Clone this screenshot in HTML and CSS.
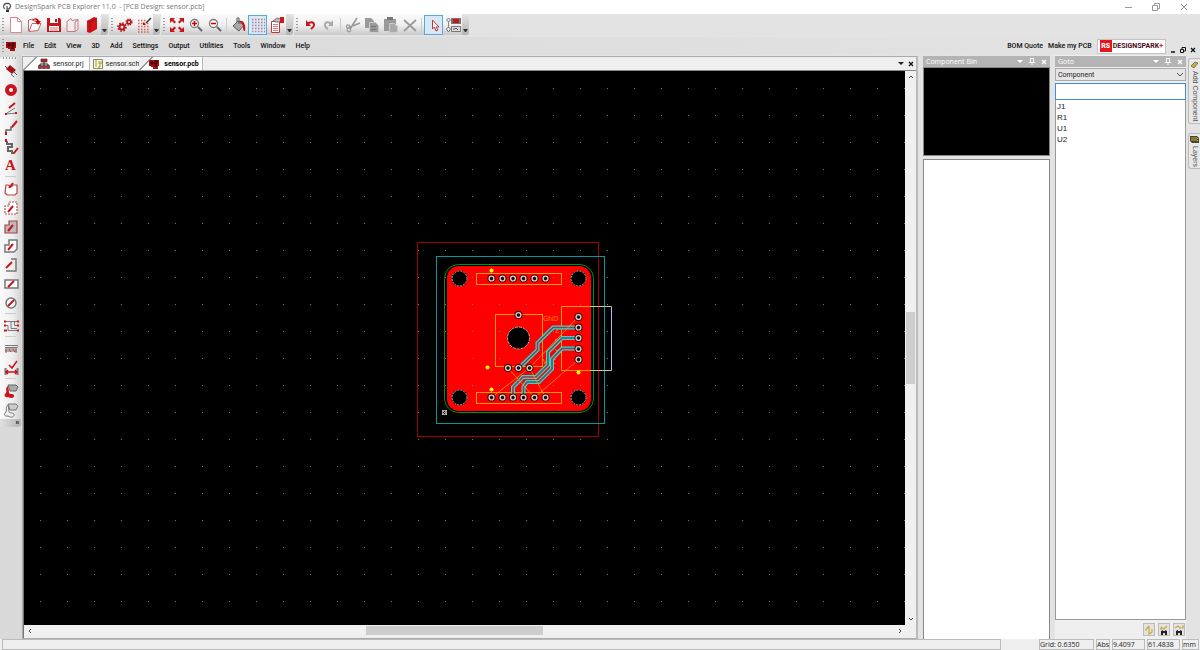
FILE: index.html
```html
<!DOCTYPE html>
<html lang="en">
<head>
    <meta charset="UTF-8">
    <meta name="viewport" content="width=device-width, initial-scale=1.0">
    <title>DesignSpark PCB Explorer 11.0 - [PCB Design: sensor.pcb]</title>
    <link rel="stylesheet" href="styles.css">
</head>
<body>
    <div class="title-bar">
        <svg class="app-icon" width="10" height="11" viewBox="0 0 10 11"><path d="M3 7C1 6 1 2 4 1.500h3c2 1 2 4 0 5.500H5V4" fill="none" stroke="#555" stroke-width="1.300"/><path d="M4 8h3v2H4z" fill="#333"/></svg>
        <span class="title">DesignSpark PCB Explorer 11.0 &nbsp;- [PCB Design: sensor.pcb]</span>
        <div class="window-buttons">
            <button aria-label="Minimize"><svg width="8" height="8"><path d="M1 4.500h7" stroke="#999"/></svg></button>
            <button aria-label="Restore"><svg width="8" height="8"><path d="M.5 2.500h5v5h-5zM2.500 2V.5h5v5H6" fill="none" stroke="#999"/></svg></button>
            <button aria-label="Close"><svg width="8" height="8"><path d="M1 1l6 6M7 1L1 7" stroke="#999"/></svg></button>
        </div>
    </div>

    <div class="toolbar">
        <div class="tool-group">
            <i class="grip"></i>
            <button aria-label="New"><svg width="16" height="18"><path d="M2.500 1.500h7l4 4v11h-11z" fill="#fff" stroke="#d98a8a"/><path d="M9.500 1.500v4h4" fill="none" stroke="#d98a8a"/></svg></button>
            <button aria-label="Open"><svg width="16" height="18"><path d="M1.500 15V4l4-1 1 2h4M2 15.500l3-8h9l-3 7z" fill="#fff" stroke="#b66"/><path d="M5 5c2-4 6-3 7 0h2l-3 4-3-4h2C9 3 7 3 5 5" fill="#c00"/></svg></button>
            <button aria-label="Save"><svg width="16" height="18"><path d="M1 2h13l1 2v12H1z" fill="#c9141c"/><path d="M4 2h8v5H4zM3 10h10v5H3z" fill="#fff"/><path d="M9 3h2v3H9z" fill="#c9141c"/><path d="M4 12h8M4 14h8" stroke="#c77"/></svg></button>
            <button aria-label="Close folder"><svg width="16" height="18"><path d="M2 5.500l4-3 1 2 6-1v10l-3 2H2z" fill="#eee" stroke="#c77"/><path d="M10 15V6l3-2" fill="none" stroke="#c77"/></svg></button>
            <button aria-label="Library"><svg width="16" height="18"><path d="M3 5l7-4 3 1v11l-7 4-3-1z" fill="#d2141b"/><path d="M3 5l3 1 7-4M6 6v10" fill="none" stroke="#8b0a10" stroke-width=".7"/></svg></button>
            <i class="more"></i>
        </div>
        <div class="tool-group">
            <i class="grip"></i>
            <button aria-label="Options"><svg width="16" height="18"><circle cx="5" cy="11" r="2.500" fill="none" stroke="#b9151b" stroke-width="2"/><circle cx="5" cy="11" r="4" fill="none" stroke="#b9151b" stroke-width="1.600" stroke-dasharray="1.600 1.500"/><circle cx="12" cy="6" r="1.800" fill="none" stroke="#b9151b" stroke-width="1.600"/><circle cx="12" cy="6" r="3" fill="none" stroke="#b9151b" stroke-width="1.300" stroke-dasharray="1.400 1"/></svg></button>
            <button aria-label="Grid setup"><svg width="16" height="18"><path d="M2 4.500h9M2 7.500h12M2 10.500h12M2 13.500h12M2 16h12" stroke="#d66" stroke-width="1.400" stroke-dasharray="1.500 1.500"/><path d="M15 2l-5 5" stroke="#333" stroke-width="1.500"/><path d="M7 6l3 3H7z" fill="#c00"/></svg></button>
            <i class="more"></i>
        </div>
        <div class="tool-group">
            <i class="grip"></i>
            <button aria-label="View all"><svg width="16" height="18"><path d="M1 2h5L4.500 3.500 7 6 5.500 7.500 3 5 1 7zM15 2h-5l1.500 1.500L9 6l1.500 1.500L13 5l2 2zM1 16h5l-1.500-1.500L7 12l-1.500-1.500L3 13l-2-2zM15 16h-5l1.500-1.500L9 12l1.500-1.500L13 13l2-2z" fill="#c9141c"/></svg></button>
            <button aria-label="Zoom in"><svg width="16" height="18"><circle cx="6.500" cy="7.500" r="4" fill="#fff" stroke="#777" stroke-width="1.300"/><path d="M10 11l4 4" stroke="#666" stroke-width="2"/><path d="M4 7.500h5M6.500 5v5" stroke="#c00" stroke-width="1.600"/></svg></button>
            <button aria-label="Zoom out"><svg width="16" height="18"><circle cx="6.500" cy="7.500" r="4" fill="#fff" stroke="#777" stroke-width="1.300"/><path d="M10 11l4 4" stroke="#666" stroke-width="2"/><path d="M4 7.500h5" stroke="#c00" stroke-width="1.600"/></svg></button>
            <i class="line"></i>
            <button aria-label="Colours"><svg width="16" height="18"><path d="M2 10l5-5 6 4-5 6z" fill="#aaa" stroke="#555"/><path d="M6 6V2h2v6" fill="none" stroke="#555"/><path d="M8 5c5-1 7 4 6 10-2 0-2-2-2-6z" fill="#c9141c"/></svg></button>
            <button class="active" aria-label="Grid"><svg width="16" height="18"><path d="M2 3.500h13M2 6.500h13M2 9.500h13M2 12.500h13M2 15.500h13" stroke="#c07a88" stroke-width="1.300" stroke-dasharray="1.500 1.500"/></svg></button>
            <button aria-label="Properties"><svg width="16" height="18"><path d="M2.500 5.500h8v11h-8z" fill="#fff" stroke="#c33"/><path d="M4 8.500h5M4 10.500h5M4 12.500h5M4 14.500h5" stroke="#d77"/><path d="M4 5l4-3 4 1v3H7z" fill="#bbb" stroke="#555" stroke-width=".7"/><path d="M11 1h4v6h-4z" fill="#d2141b"/></svg></button>
            <i class="more"></i>
        </div>
        <div class="tool-group">
            <i class="grip"></i>
            <button aria-label="Undo"><svg width="16" height="18"><path d="M5 8c4-3 7-2 7 1 0 2-2 3-3 4" fill="none" stroke="#c9141c" stroke-width="2"/><path d="M4 4v6h5z" fill="#c9141c"/></svg></button>
            <button aria-label="Redo"><svg width="16" height="18"><path d="M11 8C7 5 4 6 4 9c0 2 1 3 3 4" fill="none" stroke="#aaa" stroke-width="2"/><path d="M12 4v6H7z" fill="#aaa"/></svg></button>
            <i class="line"></i>
            <button aria-label="Cut"><svg width="16" height="18"><path d="M12 2L5 13M15 7L5 11" stroke="#999" stroke-width="1.600"/><circle cx="4" cy="14" r="1.800" fill="none" stroke="#999" stroke-width="1.200"/><circle cx="3" cy="10.500" r="1.600" fill="none" stroke="#999" stroke-width="1.200"/></svg></button>
            <button aria-label="Copy"><svg width="16" height="18"><path d="M1 2h6l3 3v7H1z" fill="#999"/><path d="M5.500 6.500h6l3 3v7h-9z" fill="#999" stroke="#ccc"/><path d="M7 10.500h5M7 13.500h5" stroke="#777"/></svg></button>
            <button aria-label="Paste"><svg width="16" height="18"><path d="M1 3h12v12H1z" fill="#999"/><path d="M4 1h6v3H4z" fill="#777"/><path d="M6.500 7.500h5l3 3v6h-8z" fill="#aaa" stroke="#ccc"/></svg></button>
            <button aria-label="Delete"><svg width="16" height="18"><path d="M2 4l12 11M14 4L2 15" stroke="#999" stroke-width="1.700"/></svg></button>
            <i class="line"></i>
            <button class="active" aria-label="Select"><svg width="16" height="18"><path d="M6.500 4v9l2-2 1.500 4 2-1-2-3h3z" fill="#fff" stroke="#c33"/></svg></button>
            <button aria-label="Component bin"><svg width="16" height="18"><path d="M3.500 2v14" stroke="#888"/><path d="M3.500 2l2 2-2 2-2-2zM3.500 11l2 2-2 3-2-3z" fill="#eee" stroke="#777"/><path d="M6 2h10v6H6z" fill="#777"/><path d="M8 3h6v4H8z" fill="#c9141c"/><path d="M6.500 10.500h9v5h-9z" fill="#ddd" stroke="#777"/><path d="M8 13h2l1-1 2 2" fill="none" stroke="#555"/></svg></button>
            <i class="more"></i>
        </div>
    </div>

    <div class="menu-bar">
        <i class="grip"></i>
        <svg class="pcb-icon" width="10" height="10"><use href="#pcb"/></svg>
        <nav class="menu">
            <a href="#">File</a>
            <a href="#">Edit</a>
            <a href="#">View</a>
            <a href="#">3D</a>
            <a href="#">Add</a>
            <a href="#">Settings</a>
            <a href="#">Output</a>
            <a href="#">Utilities</a>
            <a href="#">Tools</a>
            <a href="#">Window</a>
            <a href="#">Help</a>
        </nav>
        <nav class="links">
            <a href="#">BOM Quote</a>
            <a href="#">Make my PCB</a>
            <a class="brand" href="#"><b>RS</b><span>DESIGNSPARK</span><em>+</em></a>
        </nav>
        <div class="mdi-buttons">
            <button aria-label="Minimize document"><svg width="6" height="6"><path d="M1 5h4" stroke="#111" stroke-width="1.500"/></svg></button>
            <button aria-label="Restore document"><svg width="6" height="6"><path d="M.5 2.500h3v3h-3zM2 2V.5h3.500V4H4" fill="none" stroke="#111"/></svg></button>
            <button aria-label="Close document"><svg width="6" height="6"><path d="M1 1l4 4M5 1L1 5" stroke="#111" stroke-width="1.300"/></svg></button>
        </div>
    </div>

    <div class="workspace">
        <div class="sidebar">
            <div class="side-tools">
                <i class="grip-h"></i>
                <button aria-label="Add component"><svg width="16" height="16"><path d="M3 6l4-4 6 5-4 4z" fill="#a5141a"/><path d="M8 11l3 3M11 9l3 3M4 5L2 3" stroke="#555"/></svg></button>
                <button aria-label="Add pad"><svg width="16" height="16"><circle cx="8" cy="8" r="4" fill="#fff" stroke="#c9141c" stroke-width="4"/></svg></button>
                <button aria-label="Add connection"><svg width="16" height="16"><path d="M4 12l8-5M3 13l11-1" stroke="#777"/><path d="M6 7l6-5" stroke="#c9141c" stroke-width="2"/><path d="M2 12h2v2H2zM12 11h2v2h-2z" fill="#c9141c"/></svg></button>
                <button aria-label="Add track"><svg width="16" height="16"><path d="M3 13v-3h5V7h2" fill="none" stroke="#666" stroke-width="1.500"/><path d="M9 7l5-6" stroke="#c9141c" stroke-width="2"/><path d="M2 12h2v3H2z" fill="#c9141c"/></svg></button>
                <button aria-label="Edit track"><svg width="16" height="16"><path d="M4 2v3h5v3H5v4h4v2h3" fill="none" stroke="#666" stroke-width="2"/><path d="M11 14l4-5" stroke="#c9141c" stroke-width="2"/><path d="M2 0h2v3H2z" fill="#c9141c"/></svg></button>
                <button class="letter" aria-label="Add text">A</button>
                <i class="line-h"></i>
                <button aria-label="Add board"><svg width="16" height="16"><path d="M3 4h2l3 2 2-2h4v8l-2 2H4l-2-2z" fill="#fff" stroke="#b44" stroke-width="1.200"/><path d="M6 7l4-5" stroke="#c9141c" stroke-width="2"/></svg></button>
                <button aria-label="Add area"><svg width="16" height="16"><path d="M6 2h8v12H2V6h4z" fill="#fff" stroke="#a55" stroke-width="1.200" stroke-dasharray="2 1"/><path d="M5 12l5-6" stroke="#c9141c" stroke-width="2"/></svg></button>
                <button aria-label="Add copper"><svg width="16" height="16"><path d="M6 2h8v12H2V6h4z" fill="#bbb" stroke="#a44" stroke-width="1.200"/><path d="M5 12l5-6" stroke="#c9141c" stroke-width="2"/></svg></button>
                <button aria-label="Add shape"><svg width="16" height="16"><path d="M6 2h8v9l-3 3H2V7h4z" fill="#fff" stroke="#777" stroke-width="1.500"/><path d="M5 12l5-6" stroke="#c9141c" stroke-width="2"/></svg></button>
                <button aria-label="Add open shape"><svg width="16" height="16"><path d="M8 2h5v12H3" fill="none" stroke="#777" stroke-width="1.500"/><path d="M3 11l6-6" stroke="#c9141c" stroke-width="2"/></svg></button>
                <button aria-label="Add rectangle"><svg width="16" height="16"><path d="M2 4h13v8H2z" fill="#fff" stroke="#777" stroke-width="1.500"/><path d="M5 11l6-6" stroke="#c9141c" stroke-width="2"/></svg></button>
                <button aria-label="Add circle"><svg width="16" height="16"><circle cx="8" cy="8" r="5" fill="#fff" stroke="#777" stroke-width="1.500"/><path d="M5 11l6-6" stroke="#c9141c" stroke-width="2"/></svg></button>
                <i class="line-h"></i>
                <button aria-label="Auto route"><svg width="16" height="16"><path d="M2 3.500h6v7h6M2 7.500h3v5h9M8 3.500h6M11.500 4v3.500h4" fill="none" stroke="#777"/><path d="M1 3.500h2M1 7.500h2M1 12.500h3M14 3.500h2M14 7.500h2M14 12.500h2" stroke="#c9141c" stroke-width="2"/></svg></button>
                <i class="line-h"></i>
                <button aria-label="Clearance"><svg width="16" height="16"><path d="M2 4.500h13M2 6.500h13" stroke="#777"/><path d="M2 9h12" stroke="#aaa" stroke-width="4"/><path d="M3 8v4M13 8v4M6 8l2 3M10 8l2 3" stroke="#b44"/></svg></button>
                <button aria-label="Design rule check"><svg width="16" height="16"><path d="M2.500 8v7M14.500 8v7" stroke="#777" stroke-width="2"/><path d="M4 12h9M5 10l-2 2 2 2M12 10l2 2-2 2M6 5l3 3 5-7" fill="none" stroke="#c9141c" stroke-width="1.500"/></svg></button>
                <i class="line-h"></i>
                <button aria-label="Pour copper"><svg width="16" height="16"><path d="M5 2h8l2 2-2 4H7z" fill="#aaa" stroke="#666"/><path d="M5 3c-3 2-1 4-2 7-3 2-1 5 2 4 3 2 7 1 6-2-2-2-5 0-5-3z" fill="#c9141c"/></svg></button>
                <button aria-label="Clear copper"><svg width="16" height="16"><path d="M5 2h8l2 2-2 4H7z" fill="#ccc" stroke="#777"/><path d="M5 3c-3 2-1 4-2 7-3 2-1 5 2 4 3 2 7 1 6-2-2-2-5 0-5-3z" fill="#eee" stroke="#777"/></svg></button>
                <i class="more-h">ıı</i>
            </div>
        </div>

        <div class="document">
            <div class="tabs">
                <button class="tab slant"><svg width="12" height="11" viewBox="0 0 12 11"><path d="M6 4v3M2 8V6h8v2" fill="none" stroke="#222"/><path d="M3 1h6v3H3z" fill="#c22" stroke="#222" stroke-width=".6"/><path d="M.5 7.500h3v3h-3zM4.500 7.500h3v3h-3zM8.500 7.500h3v3h-3z" fill="#c22" stroke="#222" stroke-width=".6"/></svg>sensor.prj</button>
                <button class="tab clipped"><svg width="10" height="10"><path d="M.5.500h9v9h-9z" fill="#fffbd0" stroke="#887"/><path d="M3 1v7M6 2v3h2V2M6 9V7h2" fill="none" stroke="#993"/></svg>sensor.sch</button>
                <button class="tab slant current"><svg width="10" height="10"><use href="#pcb"/></svg>sensor.pcb</button>
                <div class="tab-tools">
                    <button aria-label="Documents"><i class="caret"></i></button>
                    <button aria-label="Close tab"><svg width="6" height="6"><path d="M1 1l4 4M5 1L1 5" stroke="#111" stroke-width="1.300"/></svg></button>
                </div>
            </div>
            <div class="view">
                <svg class="canvas" viewBox="24 71 881 554">
                    <defs>
                        <pattern id="dots" x="40" y="88" width="27" height="27" patternUnits="userSpaceOnUse"><rect width="1" height="1" fill="#777"/></pattern>
                        <g id="pad"><circle r="4" fill="#300"/><circle r="2.400" fill="#111" stroke="#d8d0c8" stroke-width="1.400"/></g>
                        <g id="hole"><circle r="8" fill="#300"/><circle r="7.500" fill="#000" stroke="#b9a9a0" stroke-dasharray="2 1"/></g>
                        <g id="pcb"><path d="M0 1h10v6H9v3H4V8H2V7H0z" fill="#a80d14"/><path d="M2 3h2v2H2zM6 2h2v3H6zM5 7h3" fill="none" stroke="#2a0505"/></g>
                    </defs>

                    <!-- copper and board outline -->
                    <rect x="447" y="266" width="144" height="145" rx="12" fill="#f00"/>
                    <rect x="444.500" y="264.500" width="149" height="148" rx="14" fill="none" stroke="#009600"/>
                    <rect x="24" y="71" width="881" height="554" fill="url(#dots)"/>
                    <rect x="417.500" y="242.500" width="181" height="194" fill="none" stroke="#a00000"/>
                    <rect x="436.500" y="256.500" width="168" height="167" fill="none" stroke="#009a9a"/>

                    <!-- component outlines -->
                    <g fill="none" stroke="#f90">
                        <rect x="476.500" y="273.500" width="85" height="11"/>
                        <rect x="476.500" y="392.500" width="85" height="11"/>
                        <rect x="495.500" y="314.500" width="47" height="52"/>
                        <path d="M591 306.500h-29.500v64H591"/>
                    </g>
                    <path d="M591 306.500h20.500v64H591" fill="none" stroke="#c8c890"/>
                    <path d="M611.500 307v63" stroke="#b8b8ff"/>
                    <g class="silk">
                        <text x="543" y="321">GND</text>
                        <text x="555" y="333">Z</text>
                        <text x="555" y="344">Y</text>
                        <text x="555" y="354">X</text>
                        <text x="543" y="364">VCC</text>
                    </g>

                    <!-- tracks: wide cyan line with a thin core -->
                    <g fill="none">
                        <g stroke="#10e6e6" stroke-width="4">
                            <path d="M578 327.500h-25l-15.500 15.500v7L519 368"/>
                            <path d="M578 338h-16l-14 14v13l-12 12h-13l-10 10v10"/>
                            <path d="M578 348.500h-16L552 359v10l-13 13h-12l-3.500 5v10"/>
                        </g>
                        <g stroke="#a33" stroke-width="1.600">
                            <path d="M578 327.500h-25l-15.500 15.500v7L519 368"/>
                            <path d="M578 338h-16l-14 14v13l-12 12h-13l-10 10v10"/>
                            <path d="M578 348.500h-16L552 359v10l-13 13h-12l-3.500 5v10"/>
                        </g>
                    </g>
                    <path d="M578.500 316.500L529.500 368l-38 29.500M508 368l26.500 29.500M529.500 368l16 29.500M578.500 359.500l-44 38" fill="none" stroke="#f90" stroke-width=".8"/>

                    <!-- mounting holes -->
                    <use href="#hole" x="459.500" y="278.500"/>
                    <use href="#hole" x="578.500" y="278.500"/>
                    <use href="#hole" x="459.500" y="397.500"/>
                    <use href="#hole" x="578.500" y="397.500"/>
                    <circle cx="518.500" cy="338" r="11" fill="#000" stroke="#b9a9a0" stroke-dasharray="3 1"/>

                    <!-- pads -->
                    <g id="row">
                        <use href="#pad" x="491.500" y="278.500"/>
                        <use href="#pad" x="502.500" y="278.500"/>
                        <use href="#pad" x="513" y="278.500"/>
                        <use href="#pad" x="523.500" y="278.500"/>
                        <use href="#pad" x="534.500" y="278.500"/>
                        <use href="#pad" x="545.500" y="278.500"/>
                    </g>
                    <use href="#row" y="119"/>
                    <use href="#pad" x="518.500" y="315"/>
                    <use href="#pad" x="508" y="368"/>
                    <use href="#pad" x="518.500" y="368"/>
                    <use href="#pad" x="529.500" y="368"/>
                    <use href="#pad" x="578.500" y="317"/>
                    <use href="#pad" x="578.500" y="327.500"/>
                    <use href="#pad" x="578.500" y="338"/>
                    <use href="#pad" x="578.500" y="349"/>
                    <use href="#pad" x="578.500" y="359.500"/>

                    <g fill="#ff0">
                        <circle cx="491.500" cy="270.500" r="2"/>
                        <circle cx="487.500" cy="367.500" r="2"/>
                        <circle cx="491.500" cy="389.500" r="2"/>
                        <circle cx="578.500" cy="372.500" r="2"/>
                    </g>
                    <path d="M442 410l5 5M447 410l-5 5M442.500 410.500h4v4h-4z" fill="none" stroke="#ccc" stroke-width=".8"/>
                </svg>
                <div class="scroll vertical">
                    <button aria-label="Scroll up"><svg width="6" height="6"><path d="M1 4l2-2 2 2" fill="none" stroke="#444"/></svg></button>
                    <i class="thumb"></i>
                    <button aria-label="Scroll down"><svg width="6" height="6"><path d="M1 2l2 2 2-2" fill="none" stroke="#444"/></svg></button>
                </div>
                <div class="scroll horizontal">
                    <button aria-label="Scroll left"><svg width="6" height="6"><path d="M4 1L2 3l2 2" fill="none" stroke="#444"/></svg></button>
                    <i class="thumb"></i>
                    <button aria-label="Scroll right"><svg width="6" height="6"><path d="M2 1l2 2-2 2" fill="none" stroke="#444"/></svg></button>
                </div>
            </div>
        </div>

        <div class="panel bin">
            <div class="panel-header">
                <h2>Component Bin</h2>
                <button aria-label="Menu"><i class="caret"></i></button>
                <button aria-label="Pin"><svg width="6" height="7"><path d="M1.500 4V.5h3V4M0 4.500h6M3 5v2" fill="none" stroke="#fff"/></svg></button>
                <button aria-label="Close"><svg width="6" height="6"><path d="M1 1l4 4M5 1L1 5" stroke="#fff" stroke-width="1.300"/></svg></button>
            </div>
            <div class="preview"></div>
            <div class="bin-list"></div>
        </div>

        <div class="panel goto">
            <div class="panel-header">
                <h2>Goto</h2>
                <button aria-label="Menu"><i class="caret"></i></button>
                <button aria-label="Pin"><svg width="6" height="7"><path d="M1.500 4V.5h3V4M0 4.500h6M3 5v2" fill="none" stroke="#fff"/></svg></button>
                <button aria-label="Close"><svg width="6" height="6"><path d="M1 1l4 4M5 1L1 5" stroke="#fff" stroke-width="1.300"/></svg></button>
            </div>
            <div class="select-wrap">
                <select aria-label="Item type">
                    <option>Component</option>
                </select>
                <svg width="6" height="6"><path d="M0 1l3 3 3-3" fill="none" stroke="#555"/></svg>
            </div>
            <input type="text" aria-label="Name">
            <ul class="results">
                <li>J1</li>
                <li>R1</li>
                <li>U1</li>
                <li>U2</li>
            </ul>
            <div class="goto-buttons">
                <button aria-label="Refresh"><svg width="10" height="10"><path d="M2 6V4l3-2v4M8 4v3L5 9V5M3 3l2-2M7 8L5 9" fill="none" stroke="#c9a93a" stroke-width="1.200"/></svg></button>
                <button aria-label="Find previous"><svg width="10" height="10"><path d="M2 2l3 2 3-3M2 2v3" fill="none" stroke="#c9a93a" stroke-width="1.200"/><path d="M2 10V6l2-1v1h2V5l2 1v4H6V8H4v2z" fill="#222"/></svg></button>
                <button aria-label="Find next"><svg width="10" height="10"><path d="M1 3l3-2 2 2h3V0" fill="none" stroke="#c9a93a" stroke-width="1.200"/><path d="M2 10V6l2-1v1h2V5l2 1v4H6V8H4v2z" fill="#222"/></svg></button>
            </div>
        </div>

        <div class="dock-tabs">
            <button><svg width="9" height="9"><path d="M1 6l4-4 3 1-4 5z" fill="#cfb22f" stroke="#665" stroke-width=".8"/></svg><span>Add Component</span></button>
            <button><svg width="9" height="9"><path d="M0 1h7l2 2v5H2L0 6z" fill="#443"/><path d="M1 3h6l1 1M1 5h6l1 1" fill="none" stroke="#cfb22f"/></svg><span>Layers</span></button>
        </div>
    </div>

    <div class="status-bar">
        <span class="message"></span>
        <span class="cell grid">Grid: 0.6350</span>
        <span class="cell">Abs</span>
        <span class="cell coord">9.4097</span>
        <span class="cell coord">61.4838</span>
        <span class="cell units">mm</span>
    </div>
</body>
</html>
```
FILE: styles.css
```css
* {
    margin: 0;
    padding: 0;
    box-sizing: border-box;
}

body {
    display: flex;
    flex-direction: column;
    height: 100vh;
    overflow: hidden;
    background: #e3e3e3;
    color: #222;
    font: 7px/10px Roboto, "Open Sans", sans-serif;
}

button {
    display: flex;
    align-items: center;
    justify-content: center;
    border: 0;
    background: none;
    color: inherit;
    font: inherit;
}

svg {
    display: block;
    flex: none;
}

a {
    color: inherit;
    text-decoration: none;
}

/* title bar */
.title-bar {
    display: flex;
    align-items: center;
    flex: none;
    height: 14px;
    padding: 0 12px 0 2px;
    background: #fff;
}

.title {
    flex: 1;
    margin-left: 3px;
    color: #777;
    font-family: "Open Sans", sans-serif;
}

.window-buttons {
    display: flex;
    gap: 20px;
}

/* toolbar */
.toolbar {
    display: flex;
    gap: 1px;
    flex: none;
    height: 23px;
    padding-bottom: 2px;
}

.tool-group {
    display: flex;
    align-items: center;
    border-radius: 0 3px 3px 0;
    background: linear-gradient(#fafafa, #f0f0f0 50%, #cacaca);
}

.tool-group button {
    width: 19px;
    height: 20px;
}

.tool-group .active {
    border: 1px solid #5aa6e0;
    background: #d5e9f8;
}

.grip {
    width: 2px;
    height: 14px;
    margin: 0 2px;
    background: repeating-linear-gradient(#999 0 1px, transparent 1px 3px);
}

.line {
    width: 1px;
    height: 14px;
    margin: 0 2px;
    background: #ccc;
}

.more {
    align-self: stretch;
    width: 7px;
    border-radius: 0 3px 3px 0;
    background: linear-gradient(#e4e4e4, #b5b5b5);
}

.more::after {
    content: "";
    display: block;
    margin: 15px 1px 0;
    border-top: 3px solid #333;
    border-left: 2px solid transparent;
    border-right: 2px solid transparent;
}

/* menu */
.menu-bar {
    display: flex;
    align-items: center;
    flex: none;
    height: 18px;
    padding-right: 4px;
    background: linear-gradient(90deg, #dadada, #e3e3e3);
    color: #111;
    font-weight: 500;
}

.pcb-icon {
    margin-right: 7px;
}

.menu {
    display: flex;
    flex: 1;
    gap: 10px;
}

.links {
    display: flex;
    align-items: center;
    gap: 5px;
}

.brand {
    display: flex;
    align-items: center;
    height: 15px;
    padding: 0 2px;
    border: 1px solid #c4c4c4;
    background: #fff;
    color: #4a0d18;
    font: bold 7px/12px Roboto, sans-serif;
}

.brand b {
    width: 12px;
    margin-right: 1px;
    background: #e8131b;
    color: #fff;
    text-align: center;
}

.brand em {
    color: #e8131b;
    font-style: normal;
}

.mdi-buttons {
    display: flex;
    align-self: flex-end;
    gap: 4px;
    margin: 0 0 2px 4px;
}

/* workspace */
.workspace {
    display: flex;
    flex: 1;
    min-height: 0;
}

.sidebar {
    flex: none;
    width: 22px;
    padding-top: 2px;
    background: #d9d9d9;
}

.side-tools {
    width: 21px;
    border-radius: 3px;
    background: linear-gradient(90deg, #fafafa, #eee 60%, #d2d2d2);
}

.side-tools button {
    width: 21px;
    height: 19px;
}

.side-tools .letter {
    color: #c9141c;
    font: bold 15px/19px "Liberation Serif", serif;
}

.grip-h {
    display: block;
    height: 2px;
    margin: 0 3px 2px;
    background: repeating-linear-gradient(90deg, #999 0 1px, transparent 1px 3px);
}

.line-h {
    display: block;
    height: 1px;
    margin: 1px 5px 2px;
    background: #ccc;
}

.more-h {
    display: block;
    height: 8px;
    padding-right: 2px;
    border-radius: 0 0 3px 3px;
    background: linear-gradient(90deg, #e0e0e0, #b5b5b5);
    font: bold 6px/7px "Liberation Sans", sans-serif;
    text-align: right;
}

.document {
    display: flex;
    flex-direction: column;
    flex: 1;
    min-width: 0;
    margin-top: 1px;
    border: 1px solid #aaa;
    border-right: 2px solid #bbb;
    background: #efefef;
}

.tabs {
    display: flex;
    flex: none;
    height: 14px;
    border-bottom: 1px solid #888;
}

.tab {
    gap: 3px;
    padding: 0 5px 0 3px;
    border-right: 1px solid #bbb;
    background: #f4f4f4;
}

.tab.slant {
    padding-left: 15px;
    background: linear-gradient(135deg, #efefef 9px, #999 9px 10px, #fff 10px);
}

.tab.clipped {
    padding-right: 0;
    border-right: 0;
}

.tab.current {
    gap: 5px;
    padding: 0 3px 0 10px;
    color: #000;
    font-weight: bold;
}

.tab-tools {
    display: flex;
    align-items: center;
    gap: 4px;
    margin-left: auto;
    padding-right: 2px;
}

.caret {
    border-top: 3px solid currentColor;
    border-left: 3px solid transparent;
    border-right: 3px solid transparent;
}

.view {
    display: grid;
    grid-template: 1fr 11px / 1fr 11px;
    flex: 1;
    min-height: 0;
    padding-bottom: 2px;
    border-left: 1px solid #777;
}

.canvas {
    width: 100%;
    height: 100%;
    min-height: 0;
    background: #000;
}

.silk {
    fill: #f90;
    font: 7px "Open Sans", sans-serif;
}

.scroll {
    display: flex;
    align-items: center;
    justify-content: space-between;
    background: #f0f0f0;
}

.scroll button {
    width: 11px;
    height: 11px;
}

.thumb {
    background: #cdcdcd;
}

.vertical {
    flex-direction: column;
}

.vertical .thumb {
    width: 9px;
    height: 13%;
}

.horizontal .thumb {
    width: 20%;
    height: 9px;
    margin-right: 20px;
}

/* docked panels */
.panel {
    display: flex;
    flex-direction: column;
    flex: none;
    padding-top: 1px;
}

.bin {
    width: 127px;
    margin-left: 5px;
}

.goto {
    width: 131px;
    margin-left: 5px;
    background: #efefef;
}

.panel-header {
    display: flex;
    align-items: center;
    gap: 6px;
    flex: none;
    height: 11px;
    padding: 0 3px;
    background: #b4b4b4;
    color: #fff;
}

.panel-header h2 {
    flex: 1;
    font: 7px/10px "Open Sans", sans-serif;
}

.preview {
    flex: none;
    height: 89px;
    margin-bottom: 3px;
    border: 1px solid #888;
    background: #000;
}

.bin-list {
    flex: 1;
    border: 1px solid #888;
    border-bottom: 0;
    background: #fff;
}

.select-wrap {
    position: relative;
    height: 13px;
    margin: 1px 0 2px;
}

.select-wrap select {
    width: 100%;
    height: 13px;
    padding: 0 2px;
    border: 1px solid #aaa;
    background: #e5e5e5;
    color: #222;
    font: inherit;
    appearance: none;
}

.select-wrap svg {
    position: absolute;
    top: 4px;
    right: 3px;
    pointer-events: none;
}

.goto input {
    width: 100%;
    height: 17px;
    padding: 0 3px;
    border: 1px solid #3c8fd4;
    background: #fff;
    font: inherit;
}

.results {
    flex: 1;
    padding: 1px;
    border: 1px solid #999;
    border-top: 0;
    background: #fff;
    list-style: none;
    font: 8px/11px "Liberation Sans", sans-serif;
}

.goto-buttons {
    display: flex;
    justify-content: flex-end;
    gap: 3px;
    padding: 3px 1px;
}

.goto-buttons button {
    width: 12px;
    height: 13px;
    border: 1px solid #bbb;
    background: #e3e3e3;
}

.dock-tabs {
    display: flex;
    flex-direction: column;
    align-items: flex-start;
    gap: 9px;
    flex: none;
    width: 14px;
    padding: 3px 0 0 2px;
}

.dock-tabs button {
    flex-direction: column;
    gap: 2px;
    width: 12px;
    padding: 1px 0;
    border: 1px solid #bbb;
    border-right: 0;
    border-radius: 3px 0 0 3px;
    background: #e8e8e8;
    color: #555;
}

.dock-tabs span {
    writing-mode: vertical-rl;
    font: 7px/10px "Liberation Sans", sans-serif;
}

/* status bar */
.status-bar {
    display: flex;
    gap: 2px;
    flex: none;
    height: 11px;
    padding: 0 1px 0 2px;
    background: #efefef;
    font-family: "Open Sans", sans-serif;
}

.message {
    flex: 1;
    margin-right: 36px;
    border: 1px solid #bbb;
}

.cell {
    border: 1px solid #bbb;
    line-height: 9px;
}

.grid {
    width: 55px;
}

.coord {
    width: 33px;
}

.units {
    width: 17px;
}
```
